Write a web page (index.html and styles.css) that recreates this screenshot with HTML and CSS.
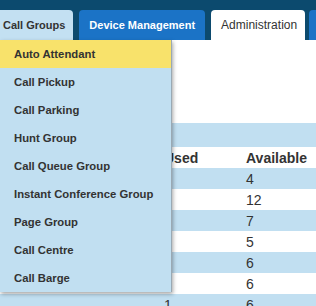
FILE: index.html
```html
<!DOCTYPE html>
<html lang="en">
<head>
  <meta charset="UTF-8">
  <title>Call Groups</title>
  <link rel="stylesheet" href="styles.css">
</head>
<body>
  <div class="topbar">
    <div class="tabs">
      <div class="tab tab-light">Call Groups</div>
      <div class="tab tab-blue">Device Management</div>
      <div class="tab tab-white">Administration</div>
      <div class="tab tab-blue tab-more"></div>
    </div>
  </div>

  <div class="content">
    <div class="band"></div>
    <table class="usage">
      <tr class="head">
        <td class="c-name"></td>
        <td class="c-used">Used</td>
        <td class="c-avail">Available</td>
      </tr>
      <tr class="alt"><td class="c-name"></td><td class="c-used">1</td><td class="c-avail">4</td></tr>
      <tr><td class="c-name"></td><td class="c-used">0</td><td class="c-avail">12</td></tr>
      <tr class="alt"><td class="c-name"></td><td class="c-used">1</td><td class="c-avail">7</td></tr>
      <tr><td class="c-name"></td><td class="c-used">3</td><td class="c-avail">5</td></tr>
      <tr class="alt"><td class="c-name"></td><td class="c-used">2</td><td class="c-avail">6</td></tr>
      <tr><td class="c-name"></td><td class="c-used">2</td><td class="c-avail">6</td></tr>
      <tr class="alt"><td class="c-name"></td><td class="c-used">1</td><td class="c-avail">6</td></tr>
    </table>

    <!-- Call Groups dropdown -->
    <ul class="menu">
      <li class="menu-item active">Auto Attendant</li>
      <li class="menu-item">Call Pickup</li>
      <li class="menu-item">Call Parking</li>
      <li class="menu-item">Hunt Group</li>
      <li class="menu-item">Call Queue Group</li>
      <li class="menu-item">Instant Conference Group</li>
      <li class="menu-item">Page Group</li>
      <li class="menu-item">Call Centre</li>
      <li class="menu-item">Call Barge</li>
    </ul>
  </div>
</body>
</html>
```

FILE: styles.css
```css
body {
  margin: 0;
  padding: 0;
  font-family: "Liberation Sans", Arial, sans-serif;
  color: #333;
  background: #fff;
  overflow: hidden;
}

.topbar {
  background: #0c4a6e;
  padding-top: 10px;
  height: 30px;
}

.tabs {
  display: flex;
  gap: 6px;
  margin-left: -6px;
  white-space: nowrap;
}

.tab {
  height: 30px;
  line-height: 30px;
  padding: 0 10px;
  border-radius: 4px 4px 0 0;
  font-size: 11px;
  font-weight: bold;
  flex-shrink: 0;
}

.tab-light {
  background: #c3e0f2;
  color: #333;
  padding: 0 8px 0 9px;
}

.tab-blue {
  background: #1b73c6;
  color: #fff;
}

.tab-white {
  background: #fff;
  color: #333;
  font-weight: normal;
  font-size: 12px;
  padding: 0 8px 0 10px;
  margin-right: -2px;
}

.tab-more {
  width: 40px;
}

.content {
  position: relative;
  padding-top: 83px;
  height: 183px;
}

.band {
  height: 24px;
  background: #c1dff1;
}

.usage {
  width: 100%;
  border-collapse: collapse;
  font-size: 14px;
}

.usage td {
  height: 21px;
  padding: 0;
}

.usage .head td {
  font-weight: bold;
}

.usage .alt {
  background: #c1dff1;
}

.c-name {
  width: 164px;
}

.c-used {
  width: 82px;
}

.menu {
  position: absolute;
  top: 0;
  left: 0;
  width: 171px;
  margin: 0;
  padding: 0;
  list-style: none;
  background: #c1dff1;
  border-right: 1px solid #9aa9b3;
  box-shadow: 1px 2px 4px rgba(0, 0, 0, 0.35);
}

.menu-item {
  height: 28px;
  line-height: 29px;
  padding-left: 14px;
  font-size: 11.3px;
  font-weight: bold;
  color: #333;
}

.menu-item.active {
  background: #f8e26b;
}
```
